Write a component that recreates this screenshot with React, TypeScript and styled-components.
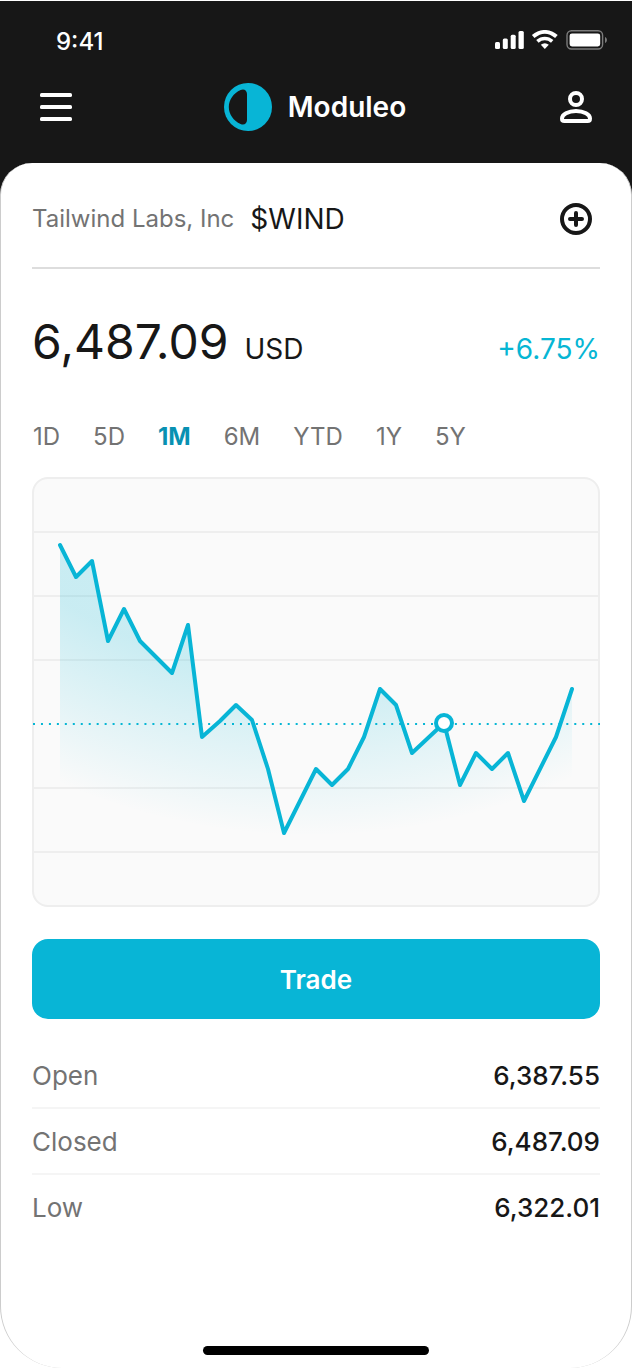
import React, { useState } from "react";
import styled, { createGlobalStyle } from "styled-components";

const GlobalStyle = createGlobalStyle`
  *, *::before, *::after { box-sizing: border-box; }
  body {
    margin: 0;
    background: #fff;
    color: #171717;
    font-family: Inter, "Liberation Sans", sans-serif;
  }
  button { font-family: inherit; padding: 0; border: 0; background: none; cursor: pointer; }
  svg { display: block; }
`;

const Screen = styled.div`
  display: flex;
  flex-direction: column;
  min-height: 100vh;
  padding-top: 1px;
`;

const Header = styled.header`
  background: #171717;
  color: #fff;
  padding-bottom: 62px;
`;

const StatusBar = styled.div`
  display: flex;
  align-items: center;
  justify-content: space-between;
  height: 80px;
  padding: 0 24px 0 56px;
`;

const Clock = styled.time`
  padding-top: 2px;
  font-size: 24px;
  font-weight: 500;
  line-height: 32px;
`;

const Nav = styled.nav`
  display: flex;
  align-items: center;
  justify-content: space-between;
  height: 52px;
  padding: 0 40px;
`;

const IconButton = styled.button`
  width: 32px;
  height: 32px;
  color: inherit;
`;

const Brand = styled.a`
  display: flex;
  align-items: center;
  gap: 16px;
  margin-right: 2px;
  color: inherit;
  text-decoration: none;
  font-size: 28px;
  font-weight: 600;
  line-height: 32px;
`;

const Card = styled.main`
  flex: 1;
  display: flex;
  flex-direction: column;
  margin-top: -32px;
  padding: 0 31px 13px;
  background: #fff;
  border: 1px solid #ccc;
  border-width: 0 1px;
  border-radius: 32px 32px 62px 62px;
`;

const TitleRow = styled.div`
  display: flex;
  align-items: center;
  justify-content: space-between;
  height: 106px;
  padding: 8px 8px 0 0;
  border-bottom: 2px solid #ddd;
`;

const Title = styled.h1`
  display: flex;
  align-items: center;
  gap: 16px;
  margin: 0;
  font-weight: 400;
`;

const Company = styled.span`
  font-size: 24px;
  line-height: 32px;
  color: #737373;
`;

const Label = styled.span<{ $accent?: boolean }>`
  font-size: 28px;
  line-height: 32px;
  color: ${(p) => (p.$accent ? "#06b6d4" : "#171717")};
`;

const PriceRow = styled.div`
  display: flex;
  align-items: baseline;
  justify-content: space-between;
  padding-top: 49px;
`;

const Price = styled.div`
  display: flex;
  align-items: baseline;
  gap: 16px;
`;

const Amount = styled.span`
  font-size: 48px;
  line-height: 48px;
`;

const Ranges = styled.div`
  display: flex;
  gap: 33px;
  margin-top: 55px;
  padding-left: 1px;
`;

const RangeButton = styled.button<{ $active: boolean }>`
  font-size: 24px;
  line-height: 32px;
  font-weight: ${(p) => (p.$active ? 700 : 400)};
  color: ${(p) => (p.$active ? "#0891b2" : "#737373")};
`;

const ChartBox = styled.figure`
  margin: 24px 0 0;
  border: 2px solid #eee;
  border-radius: 16px;
  background: #fafafa;
  svg { width: 100%; height: auto; overflow: visible; }
`;

const TradeButton = styled.button`
  height: 80px;
  margin-top: 32px;
  padding-top: 2px;
  border-radius: 16px;
  background: #08b5d6;
  color: #fff;
  font-size: 26px;
  font-weight: 600;
  line-height: 32px;
`;

const Stats = styled.dl`
  margin: 24px 0 0;
`;

const StatRow = styled.div`
  display: flex;
  align-items: center;
  justify-content: space-between;
  height: 66px;
  padding-top: 2px;
  font-size: 26px;
  line-height: 32px;
  border-bottom: 2px solid #f5f5f5;
  &:last-child { border-bottom-color: transparent; }
  dt { color: #737373; }
  dd { margin: 0; font-weight: 500; }
`;

const HomeIndicator = styled.div`
  width: 226px;
  height: 9px;
  margin: auto auto 0;
  border-radius: 5px;
  background: #000;
`;

const StatusIcons = () => (
  <svg width="114" height="22" viewBox="494 30 114 22" fill="#fff" aria-hidden="true">
    <rect x="495" y="42" width="5" height="7" rx="1.5" />
    <rect x="502.8" y="38.5" width="5" height="10.5" rx="1.5" />
    <rect x="510.7" y="34.7" width="5" height="14.3" rx="1.5" />
    <rect x="518.5" y="31" width="5.3" height="18" rx="1.5" />
    <g fill="none" stroke="#fff" strokeWidth="4">
      <path d="M533.2 36.6C540.5 30.4 549.1 30.4 556.4 36.6" />
      <path d="M537.4 41.4C541.8 37.5 547.8 37.5 552.2 41.4" strokeWidth="3.6" />
    </g>
    <path d="M540.8 44.8C543.3 42.8 546.3 42.8 548.8 44.8L544.8 49Z" />
    <rect x="567" y="30.8" width="35.6" height="18.2" rx="4.5" fill="none" stroke="#7c7c7c" strokeWidth="1.4" />
    <rect x="569.6" y="33.4" width="30.6" height="13" rx="2.4" />
    <path d="M605 37V43C607.6 41.8 607.6 38.2 605 37Z" fill="#7c7c7c" />
  </svg>
);

const MenuIcon = () => (
  <svg width="32" height="32" viewBox="0 0 32 32" fill="currentColor" aria-hidden="true">
    <rect y="2" width="32" height="4" rx="1.6" />
    <rect y="14" width="32" height="4" rx="1.6" />
    <rect y="26" width="32" height="4" rx="1.6" />
  </svg>
);

const UserIcon = () => (
  <svg width="32" height="32" viewBox="0 0 32 32" fill="none" stroke="currentColor" strokeWidth="4" aria-hidden="true">
    <circle cx="16" cy="8" r="6" />
    <path d="M4.4 30H27.6C29.2 30 30 29 30 27.4C30 23.8 24 20 16 20S2 23.8 2 27.4C2 29 2.8 30 4.4 30Z" />
  </svg>
);

const AddIcon = () => (
  <svg width="32" height="32" viewBox="0 0 32 32" fill="none" stroke="currentColor" strokeWidth="4" strokeLinecap="round" aria-hidden="true">
    <circle cx="16" cy="16" r="14" />
    <path d="M16 10V22M10 16H22" />
  </svg>
);

const LogoMark = () => (
  <svg width="48" height="48" viewBox="0 0 48 48" aria-hidden="true">
    <circle cx="24" cy="24" r="24" fill="#08b5d6" />
    <path d="M23 11V37C23 40.6 20 42.6 16.6 41C9.6 37.8 4.8 31.4 4.8 24S9.6 10.2 16.6 7C20 5.4 23 7.4 23 11Z" fill="#171717" />
  </svg>
);

const points: [number, number][] = [
  [26, 66], [42, 98], [58, 82], [74, 162], [90, 130], [106, 162], [138, 194],
  [154, 146], [168, 258], [186, 242], [202, 226], [218, 241], [234, 290],
  [250, 354], [282, 290], [298, 306], [314, 290], [330, 258], [346, 210],
  [362, 226], [378, 274], [410, 244], [426, 306], [442, 274], [458, 290],
  [474, 274], [490, 322], [522, 258], [538, 210],
];
const line = points.map((p) => p.join(",")).join(" ");
const gridLines = [53, 117, 181, 309, 373];

const Chart = () => (
  <svg viewBox="0 0 564 426" role="img" aria-label="Price over one month">
    <defs>
      <radialGradient id="area" gradientUnits="userSpaceOnUse" cx="276" cy="-267" r="624">
        <stop offset="0.74" stopColor="#06b6d4" stopOpacity="0.2" />
        <stop offset="1" stopColor="#06b6d4" stopOpacity="0" />
      </radialGradient>
    </defs>
    {gridLines.map((y) => (
      <line key={y} x1="0" x2="564" y1={y} y2={y} stroke="#eee" strokeWidth="2" />
    ))}
    <polygon points={`26,400 ${line} 538,400`} fill="url(#area)" />
    <line x1="-1" x2="566" y1="245" y2="245" stroke="#06b6d4" strokeWidth="2" strokeDasharray="2 5.96" />
    <polyline points={line} fill="none" stroke="#08b5d6" strokeWidth="4" strokeLinecap="round" strokeLinejoin="round" />
    <circle cx="410" cy="244" r="8" fill="#fff" stroke="#08b5d6" strokeWidth="4" />
  </svg>
);

const ranges = ["1D", "5D", "1M", "6M", "YTD", "1Y", "5Y"];
const stats = [
  ["Open", "6,387.55"],
  ["Closed", "6,487.09"],
  ["Low", "6,322.01"],
];

export default function App() {
  const [range, setRange] = useState("1M");
  return (
    <Screen>
      <GlobalStyle />
      <Header>
        <StatusBar>
          <Clock>9:41</Clock>
          <StatusIcons />
        </StatusBar>
        <Nav>
          <IconButton aria-label="Menu"><MenuIcon /></IconButton>
          <Brand href="#"><LogoMark />Moduleo</Brand>
          <IconButton aria-label="Account"><UserIcon /></IconButton>
        </Nav>
      </Header>
      <Card>
        <TitleRow>
          <Title>
            <Company>Tailwind Labs, Inc</Company>
            <Label>$WIND</Label>
          </Title>
          <IconButton aria-label="Add to watchlist"><AddIcon /></IconButton>
        </TitleRow>
        <PriceRow>
          <Price>
            <Amount>6,487.09</Amount>
            <Label>USD</Label>
          </Price>
          <Label $accent>+6.75%</Label>
        </PriceRow>
        <Ranges>
          {ranges.map((r) => (
            <RangeButton key={r} $active={r === range} aria-pressed={r === range} onClick={() => setRange(r)}>
              {r}
            </RangeButton>
          ))}
        </Ranges>
        <ChartBox><Chart /></ChartBox>
        <TradeButton>Trade</TradeButton>
        <Stats>
          {stats.map(([name, value]) => (
            <StatRow key={name}>
              <dt>{name}</dt>
              <dd>{value}</dd>
            </StatRow>
          ))}
        </Stats>
        <HomeIndicator />
      </Card>
    </Screen>
  );
}
